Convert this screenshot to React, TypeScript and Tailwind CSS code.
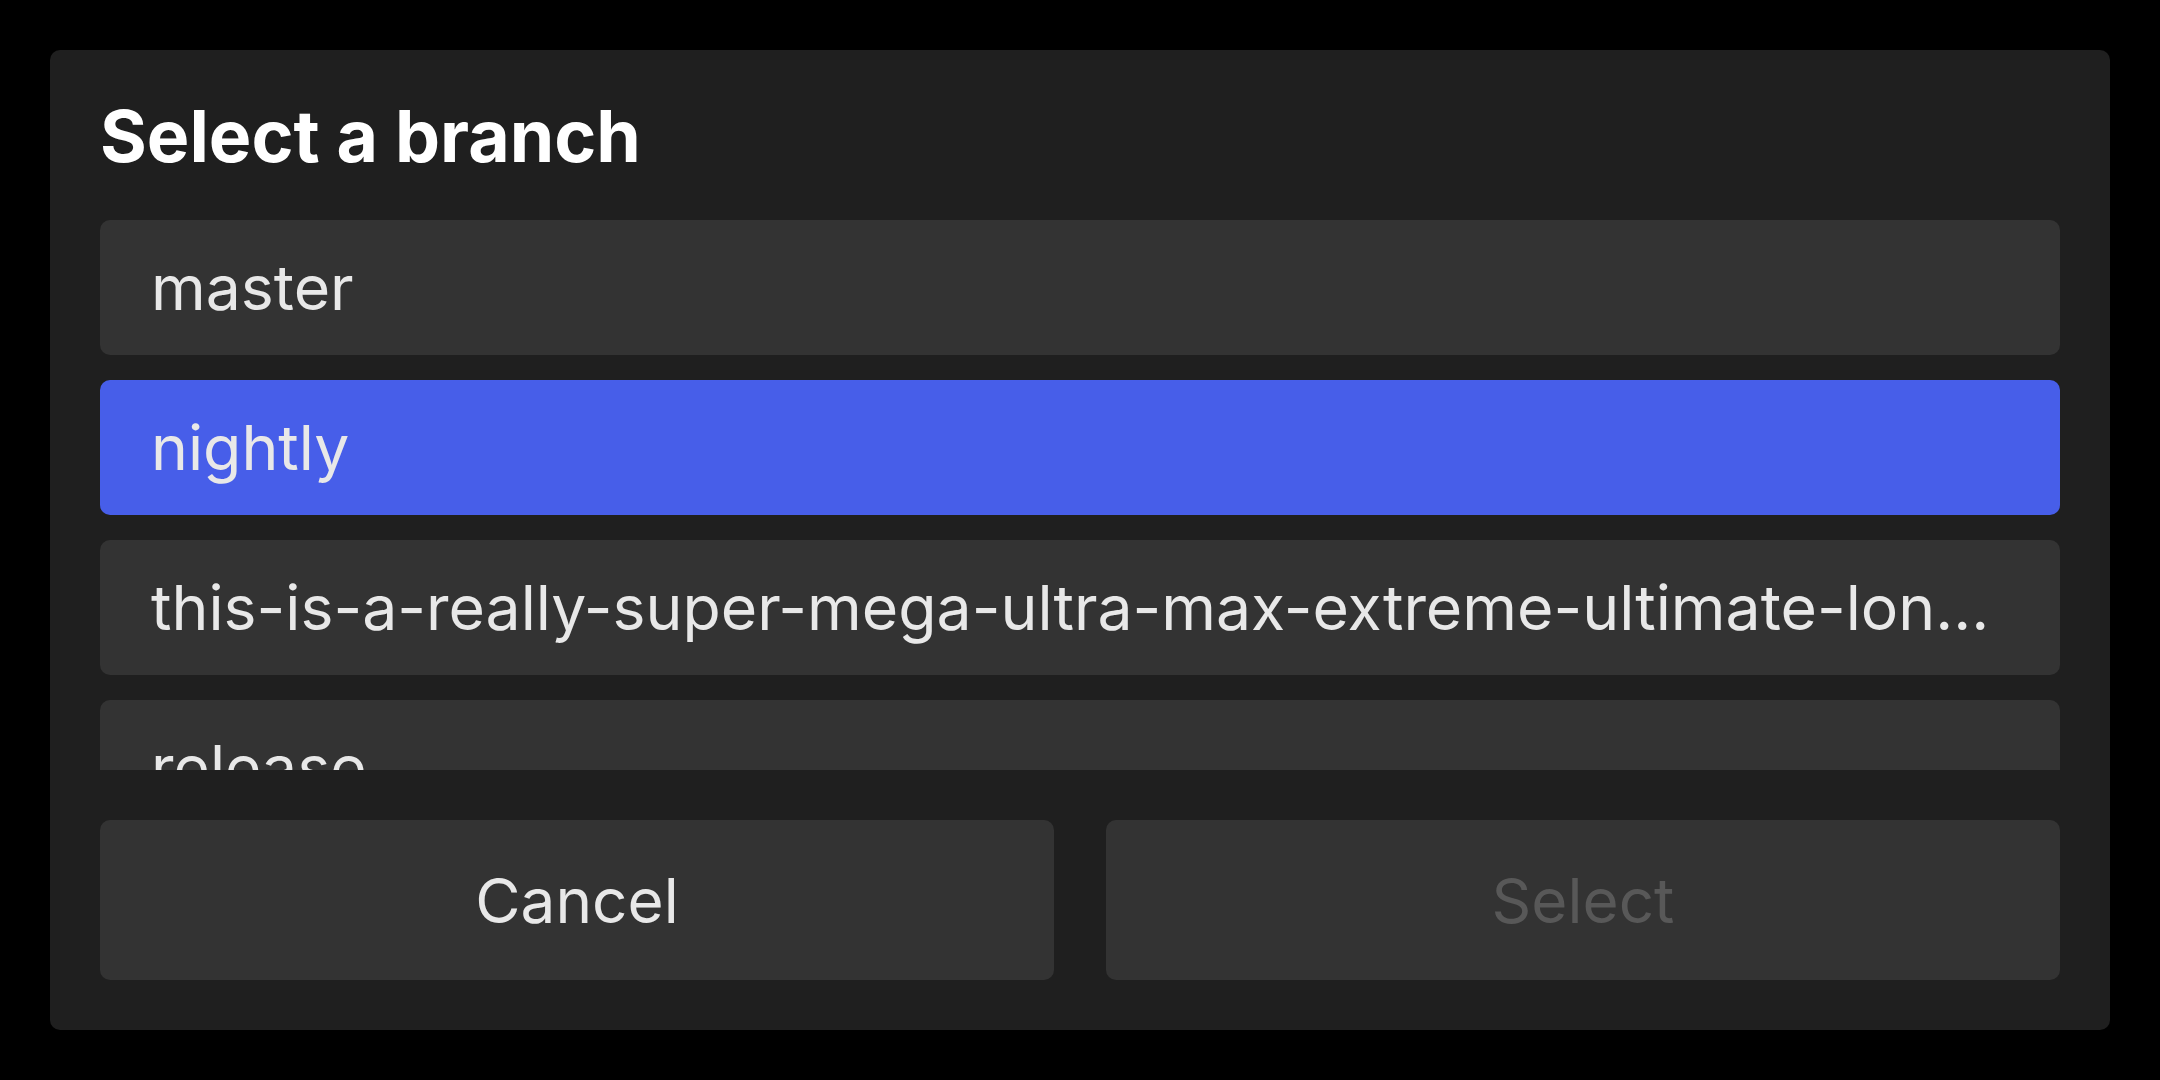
import React from "react";

const branches = [
  "master",
  "nightly",
  "this-is-a-really-super-mega-ultra-max-extreme-ultimate-long-branch-name",
  "release",
];

export default function App() {
  const selected = 1;
  return (
    <div
      className="w-full h-screen bg-black p-[50px]"
      style={{ fontFamily: "Inter, 'Noto Sans', sans-serif" }}
    >
      <div className="h-full flex flex-col rounded-[10px] bg-[#1f1f1f] p-[50px]">
        <h1 className="text-[71.5px] font-bold leading-[72px] text-white mb-[48px]">
          Select a branch
        </h1>
        <div className="h-[550px] overflow-hidden flex flex-col gap-[25px]">
          {branches.map((b, i) => (
            <div
              key={b}
              className={
                i === selected
                  ? "h-[135px] shrink-0 rounded-[10px] pl-[51px] pr-[52px] flex items-center bg-[#475ee9] text-[#e8e8e8]"
                  : "h-[135px] shrink-0 rounded-[10px] pl-[51px] pr-[52px] flex items-center bg-[#333333] text-[#e8e8e8]"
              }
            >
              <span className="block truncate text-[62.5px] min-w-0">{b}</span>
            </div>
          ))}
        </div>
        <div className="mt-[50px] grid grid-cols-2 gap-[52px]">
          <button className="h-[160px] rounded-[10px] bg-[#333333] text-[62px] text-[#e8e8e8]">
            Cancel
          </button>
          <button
            disabled
            className="h-[160px] rounded-[10px] bg-[#333333] text-[62px] text-[#585858]"
          >
            Select
          </button>
        </div>
      </div>
    </div>
  );
}
